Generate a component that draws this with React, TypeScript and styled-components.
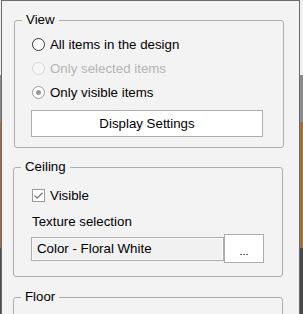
import React from "react";
import styled, { createGlobalStyle } from "styled-components";

const Global = createGlobalStyle`
  html, body { margin: 0; padding: 0; }
  body {
    width: 303px;
    height: 314px;
    overflow: hidden;
    font-family: "Liberation Sans", Arial, sans-serif;
    background: linear-gradient(
      to bottom,
      #efefef 0 75px,
      #8c8c8c 75px 122px,
      #a0703f 122px 248px,
      #4a4a4a 248px
    );
  }
`;

const Panel = styled.div`
  margin-left: 1px;
  width: 299px;
  height: 314px;
  overflow: hidden;
  box-sizing: border-box;
  background: #f3f3f3;
  border: 1px solid #6b6b6b;
  border-bottom: none;
  padding-top: 11px;
  display: flex;
  flex-direction: column;
`;

const Group = styled.fieldset<{ $indent: number; $gap: number }>`
  margin: ${(p) => p.$gap}px 0 0 ${(p) => p.$indent}px;
  width: 270px;
  box-sizing: border-box;
  padding: 0;
  min-width: 0;
  flex-shrink: 0;
  border: 1px solid #adadad;
  border-radius: 3px;
`;

const Legend = styled.legend`
  margin-left: 7px;
  padding: 0 4px;
  font-size: 13.3px;
  line-height: 16px;
  color: #000;
`;

const Body = styled.div<{ $pad: string }>`
  padding: ${(p) => p.$pad};
  display: flex;
  flex-direction: column;
  align-items: flex-start;
`;

const Row = styled.label<{ $disabled?: boolean }>`
  height: 24px;
  display: flex;
  align-items: center;
  gap: 5px;
  padding-left: 1px;
  font-size: 13.3px;
  color: ${(p) => (p.$disabled ? "#b4b4b4" : "#000")};
`;

type RadioState = "off" | "disabled" | "checkedMuted";

const Radio = styled.span<{ $state: RadioState }>`
  width: 13px;
  height: 13px;
  box-sizing: border-box;
  border-radius: 50%;
  display: flex;
  align-items: center;
  justify-content: center;
  border: 1px solid
    ${(p) =>
      p.$state === "off" ? "#333333" : p.$state === "disabled" ? "#d6d6d6" : "#9a9a9a"};
  background: ${(p) => (p.$state === "disabled" ? "#f6f6f6" : "#ffffff")};
  &::after {
    content: "";
    width: 5px;
    height: 5px;
    border-radius: 50%;
    background: #9a9a9a;
    display: ${(p) => (p.$state === "checkedMuted" ? "block" : "none")};
  }
`;

const Check = styled.span`
  width: 13px;
  height: 13px;
  box-sizing: border-box;
  border: 1px solid #9a9a9a;
  background: #ffffff;
  display: flex;
  align-items: center;
  justify-content: center;
`;

const WideButton = styled.button`
  margin-top: 6px;
  width: 232px;
  height: 27px;
  box-sizing: border-box;
  background: #ffffff;
  border: 1px solid #adadad;
  border-radius: 0;
  font-family: inherit;
  font-size: 13.3px;
  color: #000;
  padding: 0;
`;

const Caption = styled.div`
  margin-top: 7px;
  padding-left: 1px;
  height: 16px;
  line-height: 16px;
  font-size: 13.3px;
  color: #000;
`;

const PickerRow = styled.div`
  margin-top: 4px;
  display: flex;
  align-items: center;
`;

const ReadOnlyField = styled.div`
  width: 193px;
  height: 24px;
  box-sizing: border-box;
  border: 1px solid #adadad;
  box-shadow: inset 0 0 0 1px #fafafa;
  background: #f1f1f1;
  padding-left: 5px;
  display: flex;
  align-items: center;
  font-size: 13.3px;
  color: #000;
`;

const SmallButton = styled.button`
  width: 40px;
  height: 29px;
  box-sizing: border-box;
  background: #ffffff;
  border: 1px solid #adadad;
  border-radius: 0;
  font-family: inherit;
  font-size: 11px;
  color: #000;
  padding: 4px 0 0;
`;

export default function App() {
  return (
    <>
      <Global />
      <Panel>
        <Group $indent={12} $gap={0}>
          <Legend>View</Legend>
          <Body $pad="4px 0 10px 16px">
            <Row>
              <Radio $state="off" />
              All items in the design
            </Row>
            <Row $disabled>
              <Radio $state="disabled" />
              Only selected items
            </Row>
            <Row>
              <Radio $state="checkedMuted" />
              Only visible items
            </Row>
            <WideButton>Display Settings</WideButton>
          </Body>
        </Group>
        <Group $indent={11} $gap={11}>
          <Legend>Ceiling</Legend>
          <Body $pad="8px 0 13px 17px">
            <Row>
              <Check>
                <svg width="11" height="11" viewBox="0 0 11 11">
                  <path d="M1.5 5.5 L4.2 8.2 L9.5 2.8" fill="none" stroke="#7a7a7a" strokeWidth="1.3" />
                </svg>
              </Check>
              Visible
            </Row>
            <Caption>Texture selection</Caption>
            <PickerRow>
              <ReadOnlyField>Color - Floral White</ReadOnlyField>
              <SmallButton>...</SmallButton>
            </PickerRow>
          </Body>
        </Group>
        <Group $indent={11} $gap={12}>
          <Legend>Floor</Legend>
          <Body $pad="40px 0 0 17px" />
        </Group>
      </Panel>
    </>
  );
}
